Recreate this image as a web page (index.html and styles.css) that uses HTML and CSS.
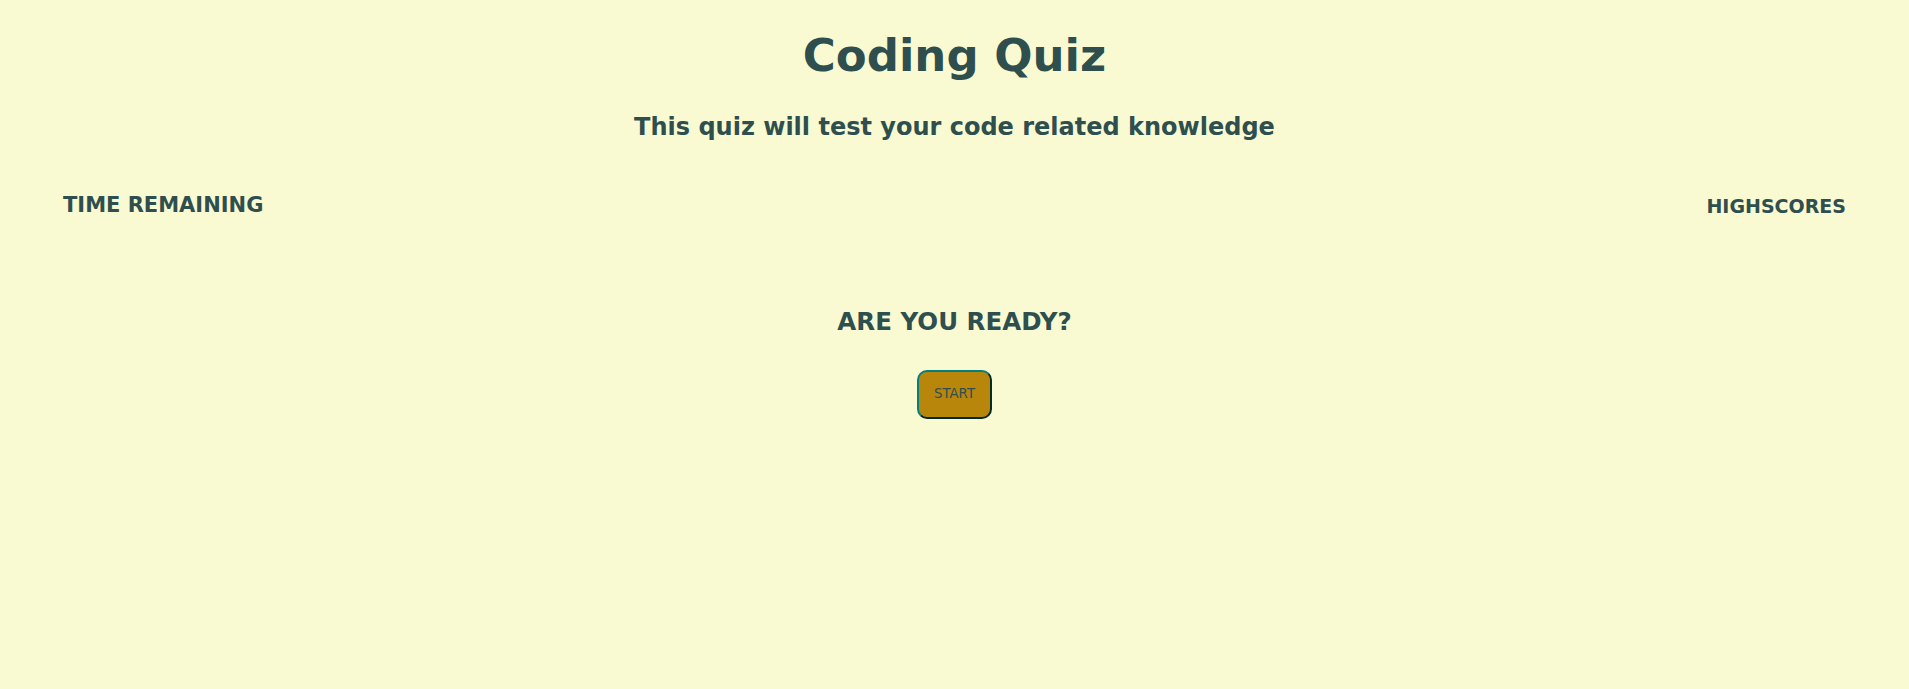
FILE: index.html
```html
<!DOCTYPE html>
<html lang="en">
<head>
<meta charset="utf-8">
<title>Coding Quiz</title>
<link rel="stylesheet" href="styles.css">
</head>
<body>
<header class="masthead">
  <h1 class="title">Coding Quiz</h1>
  <h2 class="subtitle">This quiz will test your code related knowledge</h2>
</header>
<nav class="topbar">
  <h3 class="timer">TIME REMAINING</h3>
  <h3 class="scores">HIGHSCORES</h3>
</nav>
<main class="intro">
  <h2 class="ready">ARE YOU READY?</h2>
  <button class="start-btn" type="button">START</button>
</main>
</body>
</html>
```

FILE: styles.css
```css
html, body {
  margin: 0;
  padding: 0;
}
body {
  background: #fafad2;
  color: #2f4f4f;
  font-family: Verdana, "DejaVu Sans", sans-serif;
  min-height: 689px;
}
.masthead {
  text-align: center;
  padding-top: 24px;
}
.title {
  margin: 0;
  font-size: 45px;
  line-height: 64px;
  font-weight: bold;
}
.subtitle {
  margin: 24px 0 0;
  font-size: 24px;
  line-height: 30px;
  font-weight: bold;
}
.topbar {
  display: flex;
  justify-content: space-between;
  align-items: flex-start;
  padding: 0 63px;
  margin-top: 50px;
}
.timer, .scores {
  margin: 0;
  line-height: 26px;
  font-weight: bold;
}
.timer {
  font-size: 21px;
}
.scores {
  font-size: 19px;
  margin-top: 1px;
}
.intro {
  display: flex;
  flex-direction: column;
  align-items: center;
  margin-top: 88px;
}
.ready {
  margin: 0;
  font-size: 24.5px;
  line-height: 30px;
  font-weight: bold;
}
.start-btn {
  margin-top: 33px;
  background: #b8860b;
  color: #2f4f4f;
  border: 2px outset #008080;
  border-radius: 10px;
  padding: 14px 15px 15px;
  font-family: Verdana, "DejaVu Sans", sans-serif;
  font-size: 13.33px;
  line-height: 16px;
}
```
